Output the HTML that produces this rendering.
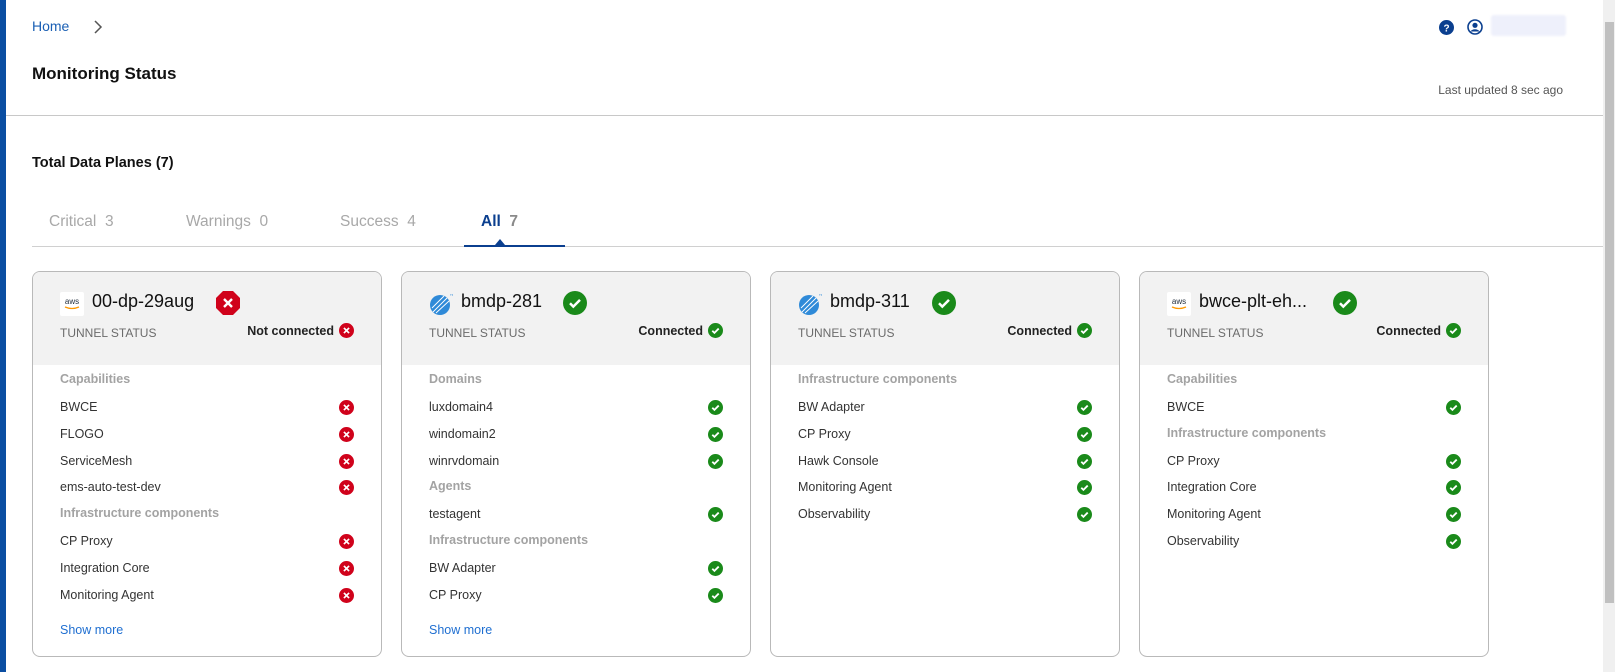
<!DOCTYPE html>
<html><head><meta charset="utf-8">
<style>
*{margin:0;padding:0;box-sizing:border-box}
body{width:1615px;height:672px;overflow:hidden;background:#fff;font-family:"Liberation Sans",sans-serif;color:#212121;position:relative}
.abs{position:absolute}
.card{position:absolute;top:271px;width:350px;height:386px;border:1px solid #b9b9b9;border-radius:8px;overflow:hidden;background:#fff}
.hd{position:absolute;left:0;top:0;width:100%;height:93px;background:#f2f2f2}
.name{position:absolute;left:59px;top:19px;font-size:18px;color:#111}
.logo{position:absolute;left:27px;top:20px;width:24px;height:24px}
.big{position:absolute;left:183px;top:19px}
.ts{position:absolute;left:27px;top:54px;font-size:12px;color:#6b6b6b}
.tsr{position:absolute;right:27px;top:51px;font-size:12.5px;font-weight:bold;color:#222;display:flex;align-items:center;gap:5px}
.row{position:absolute;left:27px;right:27px;font-size:12.5px;color:#333;height:16px;line-height:16px}
.row svg{position:absolute;right:0;top:1px}
.sec{position:absolute;left:27px;font-size:12.5px;color:#a3a3a3;font-weight:bold}
.more{position:absolute;left:27px;top:351px;font-size:12.5px;color:#1f6fd1}
</style></head><body>
<div class="abs" style="left:0;top:0;width:6px;height:672px;background:#0b4ea2"></div>
<div class="abs" style="left:32px;top:18px;font-size:14px;color:#1a5fb4">Home</div>
<svg class="abs" style="left:93px;top:19px" width="10" height="16"><path d="M2 2l6 6-6 6" fill="none" stroke="#555" stroke-width="1.5"/></svg>
<div class="abs" style="left:32px;top:64px;font-size:17px;font-weight:bold;color:#111">Monitoring Status</div>
<svg class="abs" style="left:1439px;top:20px" width="15" height="15"><circle cx="7.5" cy="7.5" r="7.5" fill="#0b3f8f"/><text x="7.5" y="11.5" font-size="10" font-weight="bold" fill="#fff" text-anchor="middle" font-family="Liberation Sans">?</text></svg>
<svg class="abs" style="left:1467px;top:19px" width="16" height="16"><circle cx="8" cy="8" r="7" fill="none" stroke="#0b3f8f" stroke-width="1.6"/><circle cx="8" cy="6.3" r="2.6" fill="#0b3f8f"/><path d="M3.5 12.5c1.5-3 7.5-3 9 0" fill="#0b3f8f"/></svg>
<div class="abs" style="left:1491px;top:15px;width:75px;height:21px;background:#eef0fb;border-radius:3px;filter:blur(1px)"></div>
<div class="abs" style="right:52px;top:83px;font-size:12px;color:#555">Last updated 8 sec ago</div>
<div class="abs" style="left:6px;top:115px;width:1597px;height:1px;background:#c8c8c8"></div>
<div class="abs" style="left:32px;top:155px;font-size:14.5px;font-weight:bold;color:#111">Total Data Planes (7)</div>
<div class="abs" style="left:49px;top:213px;font-size:15.5px;color:#a8a8a8">Critical&nbsp;&nbsp;3</div>
<div class="abs" style="left:186px;top:213px;font-size:15.5px;color:#a8a8a8">Warnings&nbsp;&nbsp;0</div>
<div class="abs" style="left:340px;top:213px;font-size:15.5px;color:#a8a8a8">Success&nbsp;&nbsp;4</div>
<div class="abs" style="left:481px;top:213px;font-size:15.5px;color:#0b3f8f;font-weight:bold">All&nbsp;&nbsp;<span style="color:#8a8a8a">7</span></div>
<div class="abs" style="left:32px;top:246px;width:1571px;height:1px;background:#d0d0d0"></div>
<div class="abs" style="left:464px;top:245px;width:101px;height:2px;background:#0b3f8f"></div>
<div class="abs" style="left:495px;top:239px;width:0;height:0;border-left:5px solid transparent;border-right:5px solid transparent;border-bottom:6px solid #0b3f8f"></div>
<div class="abs" style="left:1603px;top:0;width:12px;height:672px;background:#f0f0f0"></div>
<div class="abs" style="left:1605px;top:22px;width:9px;height:581px;background:#c0c0c0"></div>

<svg width="0" height="0" style="position:absolute">
<defs>
<symbol id="ok" viewBox="0 0 14 14"><circle cx="7" cy="7" r="7" fill="#1a8a1a"/><path d="M4 7.2l2 2 4-4" fill="none" stroke="#fff" stroke-width="1.7"/></symbol>
<symbol id="bad" viewBox="0 0 14 14"><circle cx="7" cy="7" r="7" fill="#d0021b"/><path d="M4.6 4.6l4.8 4.8M9.4 4.6l-4.8 4.8" stroke="#fff" stroke-width="1.6"/></symbol>
<symbol id="oct" viewBox="0 0 24 24"><path d="M7 0h10l7 7v10l-7 7H7l-7-7V7z" fill="#d0021b"/><path d="M8 8l8 8M16 8l-8 8" stroke="#fff" stroke-width="2.4"/></symbol>
<symbol id="bigok" viewBox="0 0 24 24"><circle cx="12" cy="12" r="12" fill="#1a8a1a"/><path d="M7 12.3l3.3 3.3 6.7-6.7" fill="none" stroke="#fff" stroke-width="2.5"/></symbol>
<symbol id="aws" viewBox="0 0 24 24"><rect width="24" height="24" fill="#fff" rx="2"/><text x="12" y="12" font-size="8" text-anchor="middle" fill="#232f3e" font-family="Liberation Sans">aws</text><path d="M5 15q7 3 14 0" fill="none" stroke="#f90" stroke-width="1.3"/></symbol>
<symbol id="tib" viewBox="0 0 24 24"><circle cx="11" cy="13" r="10" fill="#2f8ad8"/><path d="M4 20L18 6M7 21L20 9M3 16L15 4" stroke="#fff" stroke-width="0.9" fill="none"/><text x="21" y="4" font-size="3" fill="#2f8ad8">TM</text></symbol>
</defs></svg>

<div class="card" style="left:32px">
<div class="hd"></div>
<svg class="logo"><use href="#aws"/></svg>
<div class="name">00-dp-29aug</div>
<svg class="big" width="24" height="24"><use href="#oct"/></svg>
<div class="ts">TUNNEL STATUS</div>
<div class="tsr">Not connected <svg width="15" height="15"><use href="#bad"/></svg></div>
<div class="sec" style="top:100px">Capabilities</div>
<div class="row" style="top:127px">BWCE<svg width="15" height="15"><use href="#bad"/></svg></div>
<div class="row" style="top:154px">FLOGO<svg width="15" height="15"><use href="#bad"/></svg></div>
<div class="row" style="top:181px">ServiceMesh<svg width="15" height="15"><use href="#bad"/></svg></div>
<div class="row" style="top:207px">ems-auto-test-dev<svg width="15" height="15"><use href="#bad"/></svg></div>
<div class="sec" style="top:234px">Infrastructure components</div>
<div class="row" style="top:261px">CP Proxy<svg width="15" height="15"><use href="#bad"/></svg></div>
<div class="row" style="top:288px">Integration Core<svg width="15" height="15"><use href="#bad"/></svg></div>
<div class="row" style="top:315px">Monitoring Agent<svg width="15" height="15"><use href="#bad"/></svg></div>
<div class="more">Show more</div>
</div>

<div class="card" style="left:401px">
<div class="hd"></div>
<svg class="logo"><use href="#tib"/></svg>
<div class="name">bmdp-281</div>
<svg class="big" style="left:161px" width="24" height="24"><use href="#bigok"/></svg>
<div class="ts">TUNNEL STATUS</div>
<div class="tsr">Connected <svg width="15" height="15"><use href="#ok"/></svg></div>
<div class="sec" style="top:100px">Domains</div>
<div class="row" style="top:127px">luxdomain4<svg width="15" height="15"><use href="#ok"/></svg></div>
<div class="row" style="top:154px">windomain2<svg width="15" height="15"><use href="#ok"/></svg></div>
<div class="row" style="top:181px">winrvdomain<svg width="15" height="15"><use href="#ok"/></svg></div>
<div class="sec" style="top:207px">Agents</div>
<div class="row" style="top:234px">testagent<svg width="15" height="15"><use href="#ok"/></svg></div>
<div class="sec" style="top:261px">Infrastructure components</div>
<div class="row" style="top:288px">BW Adapter<svg width="15" height="15"><use href="#ok"/></svg></div>
<div class="row" style="top:315px">CP Proxy<svg width="15" height="15"><use href="#ok"/></svg></div>
<div class="more">Show more</div>
</div>

<div class="card" style="left:770px">
<div class="hd"></div>
<svg class="logo"><use href="#tib"/></svg>
<div class="name">bmdp-311</div>
<svg class="big" style="left:161px" width="24" height="24"><use href="#bigok"/></svg>
<div class="ts">TUNNEL STATUS</div>
<div class="tsr">Connected <svg width="15" height="15"><use href="#ok"/></svg></div>
<div class="sec" style="top:100px">Infrastructure components</div>
<div class="row" style="top:127px">BW Adapter<svg width="15" height="15"><use href="#ok"/></svg></div>
<div class="row" style="top:154px">CP Proxy<svg width="15" height="15"><use href="#ok"/></svg></div>
<div class="row" style="top:181px">Hawk Console<svg width="15" height="15"><use href="#ok"/></svg></div>
<div class="row" style="top:207px">Monitoring Agent<svg width="15" height="15"><use href="#ok"/></svg></div>
<div class="row" style="top:234px">Observability<svg width="15" height="15"><use href="#ok"/></svg></div>
</div>

<div class="card" style="left:1139px">
<div class="hd"></div>
<svg class="logo"><use href="#aws"/></svg>
<div class="name">bwce-plt-eh...</div>
<svg class="big" style="left:193px" width="24" height="24"><use href="#bigok"/></svg>
<div class="ts">TUNNEL STATUS</div>
<div class="tsr">Connected <svg width="15" height="15"><use href="#ok"/></svg></div>
<div class="sec" style="top:100px">Capabilities</div>
<div class="row" style="top:127px">BWCE<svg width="15" height="15"><use href="#ok"/></svg></div>
<div class="sec" style="top:154px">Infrastructure components</div>
<div class="row" style="top:181px">CP Proxy<svg width="15" height="15"><use href="#ok"/></svg></div>
<div class="row" style="top:207px">Integration Core<svg width="15" height="15"><use href="#ok"/></svg></div>
<div class="row" style="top:234px">Monitoring Agent<svg width="15" height="15"><use href="#ok"/></svg></div>
<div class="row" style="top:261px">Observability<svg width="15" height="15"><use href="#ok"/></svg></div>
</div>
</body></html>
